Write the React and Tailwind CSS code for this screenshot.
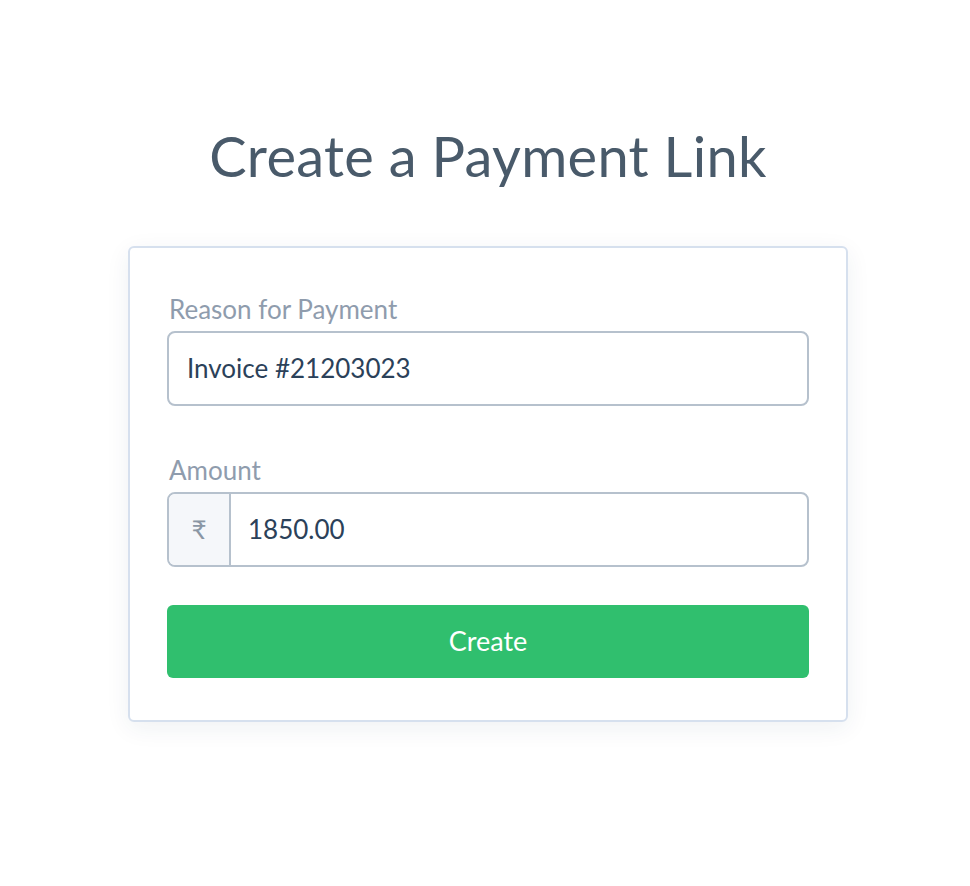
import React from 'react';

/**
 * App — Create a Payment Link form.
 */
export default function App() {
    return (
        <div
            className="min-h-[886px] bg-white flex flex-col items-center pl-[6px]"
            style={{ fontFamily: 'Lato, "Open Sans", sans-serif' }}
        >
            <h1 className="mt-[120px] text-[56px] leading-[72px] text-[#495a6a] font-normal tracking-[0.3px]">
                Create a Payment Link
            </h1>

            <div className="mt-[54px] w-[720px] bg-white border-2 border-[#d6e0ee] rounded-[6px] shadow-[0_6px_24px_rgba(30,50,80,0.07)] px-[37px] pt-[44px] pb-[42px]">
                <label className="block text-[26px] leading-[34px] text-[#8f9cad] pl-[2px] mb-[5px]">
                    Reason for Payment
                </label>
                <div className="h-[75px] border-2 border-[#b6c1cd] rounded-[8px] flex items-center px-[18px] text-[26px] text-[#2b4159]">
                    Invoice #21203023
                </div>

                <label className="block mt-[47px] text-[26px] leading-[34px] text-[#8f9cad] pl-[2px] mb-[5px]">
                    Amount
                </label>
                <div className="h-[75px] border-2 border-[#b6c1cd] rounded-[8px] flex overflow-hidden text-[26px]">
                    <div className="w-[62px] bg-[#f5f7fa] border-r-2 border-[#b6c1cd] flex items-center justify-center text-[#8a96a4]">
                        ₹
                    </div>
                    <div className="flex-1 flex items-center px-[17px] text-[#2b4159]">
                        1850.00
                    </div>
                </div>

                <button className="mt-[38px] w-full h-[73px] bg-[#30bf6e] rounded-[6px] text-white text-[27px]">
                    Create
                </button>
            </div>
        </div>
    );
}
